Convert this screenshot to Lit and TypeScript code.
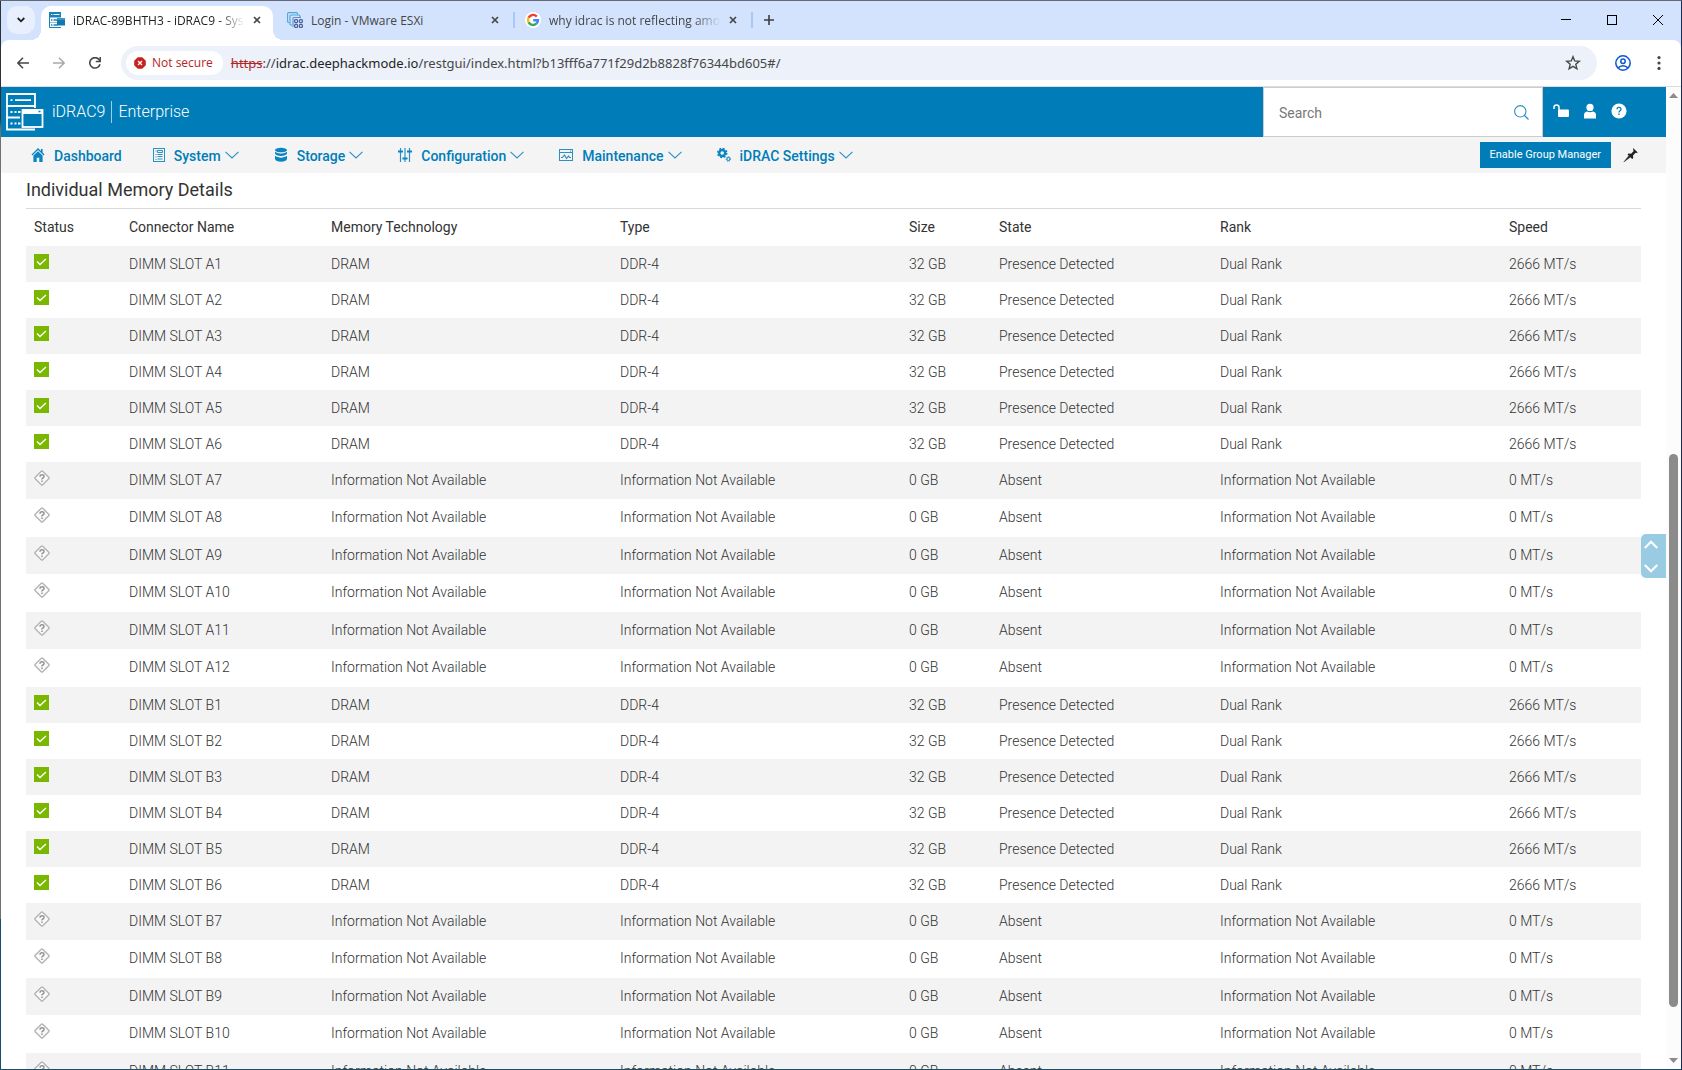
import { LitElement, html, css, svg, nothing } from "lit";
import { customElement, property } from "lit/decorators.js";
import { classMap } from "lit/directives/class-map.js";

interface Dimm {
  slot: string;
  present: boolean;
}

const slots = (bank: string, count: number): Dimm[] =>
  Array.from({ length: count }, (_, i) => ({ slot: `DIMM SLOT ${bank}${i + 1}`, present: i < 6 }));

const DIMMS: Dimm[] = [...slots("A", 12), ...slots("B", 11)];

const icon = (w: number, h: number, body: unknown) =>
  html`<svg width=${w} height=${h} viewBox="0 0 ${w} ${h}" fill="none" aria-hidden="true">${body}</svg>`;

const closeIcon = icon(8, 8, svg`<path d="M1 1l6 6M7 1l-6 6" stroke="#444746" stroke-width="1.7"/>`);

const serverFavicon = icon(16, 16, svg`
  <rect x="0" y="0" width="12" height="5" fill="#1a82b5"/>
  <path d="M2 2.5h1.4M4.5 2.5h6" stroke="#fff" stroke-width="1"/>
  <path d="M0 5.5h12M0 10.5h8" stroke="#8cc3de" stroke-width="1"/>
  <path d="M.5 5v10.5H12" stroke="#1a82b5"/>
  <path d="M2 8h1.4M4.5 8h4M2 13h1.4M4.5 13h4" stroke="#1a82b5" stroke-width="1.3"/>
  <rect x="8" y="6" width="8" height="7.5" fill="#1378ab"/>
  <path d="M8 7h8" stroke="#6fb2d3"/>`);

const vmwareFavicon = icon(16, 16, svg`
  <path d="M2.6 10.5H1.6Q.6 10.5 .6 9.5V1.6Q.6 .6 1.6 .6H9.5Q10.5 .6 10.5 1.6V2.6" stroke="#4aa8dc" stroke-width="1.1"/>
  <path d="M5 13H4Q3 13 3 12V4Q3 3 4 3H12Q13 3 13 4V5" stroke="#4aa8dc" stroke-width="1.1"/>
  <path d="M6 15V6.5Q6 5.5 7 5.5H14" stroke="#5d8fc4" stroke-width="1.1"/>
  <g stroke="#49609c" stroke-width="1.2">
    <rect x="7.6" y="7.6" width="3" height="3" rx="1"/><rect x="12.4" y="7.6" width="3" height="3" rx="1"/>
    <rect x="7.6" y="12.4" width="3" height="3" rx="1"/><rect x="12.4" y="12.4" width="3" height="3" rx="1"/>
  </g>`);

const googleFavicon = icon(16, 16, svg`
  <circle cx="8" cy="8" r="8" fill="#fff"/>
  <g stroke-width="2.4">
    <path d="M11.8 4.6A5 5 0 0 0 3.5 5.8" stroke="#ea4335"/>
    <path d="M3.5 5.8A5 5 0 0 0 3.6 10.4" stroke="#fbbc05"/>
    <path d="M3.6 10.4A5 5 0 0 0 11.3 11.7" stroke="#34a853"/>
    <path d="M11.3 11.7A5 5 0 0 0 13 8.2H8.2" stroke="#4285f4"/>
  </g>`);

const chevronIcon = icon(14, 8, svg`<path d="M.5 .8L7 7 13.5 .8" stroke="#2b90c4" stroke-width="1.1"/>`);

const navIcons: Record<string, unknown> = {
  home: icon(14, 16, svg`<path d="M7 1L.5 7.5l.8 .9L7 3l5.7 5.4 .8-.9L11.6 5.500V2H10v2z" fill="#0b84c1"/>
    <path d="M2.400 8.500L7 4.200l4.600 4.300V15H8.300v-4.200H5.700V15H2.400z" fill="#0b84c1"/>`),
  system: icon(14, 16, svg`<rect x="2.5" y="1.5" width="11" height="13" stroke="#2b90c4"/>
    <path d="M4.500 4h1M4.500 7.500h1M4.500 10h1M4.500 12.500h1" stroke="#2b90c4"/>
    <path d="M6.500 3.500h5v2h-5zM6.500 7.500h5M6.500 9.500h5M6.500 12h5" stroke="#2b90c4"/>`),
  storage: icon(14, 16, svg`<g fill="#0b84c1"><ellipse cx="7" cy="3.200" rx="6" ry="2.400"/>
    <path d="M1 4.300Q7 8 13 4.300V6.600Q12 9 7 9T1 6.600z"/><path d="M1 8.800Q7 12.200 13 8.800V12Q12 14.800 7 14.800T1 12z"/></g>
    <path d="M1 4.400Q7 7.800 13 4.400M1 8.300Q7 11.800 13 8.300" stroke="#f4f4f4"/>`),
  config: icon(14, 16, svg`<path d="M2.500 1v14M7 1v14M11.500 1v14" stroke="#2b90c4" stroke-width="1.200"/>
    <path d="M0 4.500h5M4.500 11.500h5M9 4.500h5" stroke="#0b84c1" stroke-width="2"/>`),
  maintenance: icon(14, 16, svg`<rect x=".5" y="2.500" width="13" height="11" stroke="#2b90c4"/>
    <path d="M1 5.500h12M11 4h1" stroke="#2b90c4"/><path d="M2 10.500h1.500L5.500 8l2 3.500L9.500 9l1 1.500H12" stroke="#2b90c4" stroke-width="1.100"/>`),
  gears: icon(14, 16, svg`<circle cx="5.200" cy="6" r="3" stroke="#0b84c1" stroke-width="2.400"/>
    <circle cx="5.200" cy="6" r="4.600" stroke="#0b84c1" stroke-width="1.400" stroke-dasharray="1.900 1.710"/>
    <circle cx="11.400" cy="12" r="1.500" stroke="#2b90c4" stroke-width="1.200"/>
    <circle cx="11.400" cy="12" r="2.300" stroke="#2b90c4" stroke-width="1" stroke-dasharray="1 .8"/>`),
};

const okIcon = html`<svg width="15" height="15" viewBox="0 0 15 15" role="img" aria-label="OK">
  <rect width="15" height="15" fill="#7ab800"/><path d="M3 7.500l3 3 6-5.500" fill="none" stroke="#fff" stroke-width="1.400"/></svg>`;

const unknownIcon = html`<svg width="16" height="16" viewBox="0 0 16 16" role="img" aria-label="Unknown" fill="none">
  <rect x="2.700" y="2.700" width="10.600" height="10.600" rx="1" transform="rotate(45 8 8)" fill="#fafafa" stroke="#b2b2b2" stroke-width="1.300"/>
  <path d="M6 6.700Q6 4.800 8 4.800T10 6.500Q10 7.400 8.900 8T8 9.500M8 10.500V12" stroke="#949494" stroke-width="1.500"/></svg>`;

@customElement("browser-chrome")
class BrowserChrome extends LitElement {
  static styles = css`
    :host { display: block; font: 12px/18px "Open Sans", "Noto Sans", sans-serif; color: #1f1f1f; }
    button { border: 0; padding: 0; background: none; font: inherit; display: flex; align-items: center; justify-content: center; }
    svg { display: block; flex: none; }
    .strip { display: flex; height: 39px; background: #d3e2fd; align-items: flex-end; padding-left: 6px; }
    .search-tabs { width: 28px; height: 28px; border-radius: 10px; background: #e9f0fd; margin: 0 6px 6px 0; }
    .tabs { display: flex; flex: 1; min-width: 0; }
    .tab { position: relative; display: flex; align-items: center; box-sizing: border-box; width: 232px; height: 34px; margin-right: 6px; padding: 0 12px 6px 8px; gap: 8px; color: #444746; }
    .tab.active { background: #fff; color: #1f1f1f; border-radius: 10px 10px 0 0; }
    .tab.active::before, .tab.active::after { content: ""; position: absolute; bottom: 0; width: 10px; height: 10px; }
    .tab.active::before { right: 100%; background: radial-gradient(circle at 0 0, #d3e2fd 10px, #fff 10px); }
    .tab.active::after { left: 100%; background: radial-gradient(circle at 100% 0, #d3e2fd 10px, #fff 10px); }
    .tab.divided::after { content: ""; position: absolute; right: -4px; top: 6px; width: 2px; height: 16px; background: #a8c7fa; }
    .tab-title { flex: 1; min-width: 0; padding-top: 2px; white-space: nowrap; }
    .tab-title.fade { mask-image: linear-gradient(to right, #000 84%, transparent); }
    .new-tab { width: 28px; height: 28px; }
    .window { display: flex; align-self: stretch; }
    .window button { width: 46px; height: 37px; }
    .backing { background: #d3e2fd; }
    .bar { display: flex; height: 46px; align-items: center; background: #fff; padding: 0 4px; border-radius: 8px 8px 0 0; }
    .tool { width: 36px; height: 36px; }
    .omnibox { display: flex; align-items: center; flex: 1; min-width: 0; height: 34px; box-sizing: border-box; border-radius: 17px; background: #ecf1fa; margin: 0 8px; padding: 0 16px 0 5px; }
    .chip { display: flex; align-items: center; height: 24px; padding: 0 10px 0 8px; gap: 6px; border-radius: 12px; background: #fff; color: #b3261e; }
    .url { flex: 1; margin-left: 8px; color: #474747; font: 13px/20px "Noto Sans", "Open Sans", sans-serif; white-space: nowrap; }
    .scheme { color: #b3261e; text-decoration: line-through; }
    .domain { color: #1f1f1f; }
    .edge { height: 1px; background: #dcdcdc; }
  `;

  render() {
    return html`
      <div class="strip">
        <button class="search-tabs" aria-label="Search tabs">${icon(8, 6, svg`<path d="M.7 1L4 4.300 7.300 1" stroke="#1f1f1f" stroke-width="1.800"/>`)}</button>
        <div class="tabs">
          <div class="tab active">${serverFavicon}<span class="tab-title fade">iDRAC-89BHTH3 - iDRAC9 - Sys</span><button aria-label="Close tab">${closeIcon}</button></div>
          <div class="tab divided">${vmwareFavicon}<span class="tab-title">Login - VMware ESXi</span><button aria-label="Close tab">${closeIcon}</button></div>
          <div class="tab divided">${googleFavicon}<span class="tab-title fade">why idrac is not reflecting amou</span><button aria-label="Close tab">${closeIcon}</button></div>
          <button class="new-tab" aria-label="New tab">${icon(10, 10, svg`<path d="M5 0v10M0 5h10" stroke="#3c3f42" stroke-width="1.600"/>`)}</button>
        </div>
        <div class="window">
          <button aria-label="Minimize">${icon(10, 10, svg`<path d="M0 4.500h10" stroke="#000"/>`)}</button>
          <button aria-label="Maximize">${icon(10, 10, svg`<rect x=".5" y=".5" width="9" height="9" stroke="#000"/>`)}</button>
          <button aria-label="Close">${icon(10, 10, svg`<path d="M0 0l10 10M10 0L0 10" stroke="#000"/>`)}</button>
        </div>
      </div>
      <div class="backing"><div class="bar">
        <button class="tool" aria-label="Back">${icon(12, 12, svg`<path d="M12 6H1M6 .8L.9 6 6 11.200" stroke="#474747" stroke-width="1.500"/>`)}</button>
        <button class="tool" aria-label="Forward">${icon(12, 12, svg`<path d="M0 6h11M6 .8L11.100 6 6 11.200" stroke="#a9a9a9" stroke-width="1.500"/>`)}</button>
        <button class="tool" aria-label="Reload">${icon(12, 12, svg`<path d="M11 7.200A5.200 5.200 0 1 1 10.200 2.800L11 4" stroke="#474747" stroke-width="1.600"/><path d="M11.200 0v4.500H6.800" stroke="#474747" stroke-width="1.500"/>`)}</button>
        <div class="omnibox">
          <button class="chip">${icon(12, 12, svg`<path d="M3.800 .2h4.400l3.600 3.600v4.400L8.200 11.800H3.800L.2 8.200V3.800z" fill="#c5221f"/><path d="M4 4l4 4M8 4L4 8" stroke="#fff" stroke-width="1.300"/>`)}Not secure</button>
          <span class="url"><span class="scheme">https</span>://<span class="domain">idrac.deephackmode.io</span>/restgui/index.html?b13fff6a771f29d2b8828f76344bd605#/</span>
          <button aria-label="Bookmark this tab">${icon(16, 16, svg`<path d="M8 1.700l1.700 4.200 4.600 .4-3.500 3 1.100 4.500L8 11.400l-3.900 2.400 1.100-4.500-3.500-3 4.600-.4z" stroke="#474747" stroke-width="1.400"/>`)}</button>
        </div>
        <button class="tool" aria-label="Profile">${icon(16, 16, svg`<g stroke="#0b57d0" stroke-width="1.500"><circle cx="8" cy="8" r="7.200"/><circle cx="8" cy="6.300" r="2.200"/><path d="M3 13Q5 10.700 8 10.700T13 13"/></g>`)}</button>
        <button class="tool" aria-label="Menu">${icon(4, 14, svg`<g fill="#474747"><circle cx="2" cy="1.600" r="1.600"/><circle cx="2" cy="7" r="1.600"/><circle cx="2" cy="12.400" r="1.600"/></g>`)}</button>
      </div></div>
      <div class="edge"></div>`;
  }
}

@customElement("idrac-header")
class IdracHeader extends LitElement {
  static styles = css`
    :host { display: block; font: 14px/20px Roboto, "Liberation Sans", sans-serif; }
    svg { display: block; flex: none; }
    button { border: 0; padding: 0; background: none; font: inherit; color: inherit; }
    .brand { display: flex; align-items: stretch; height: 50px; background: #007db8; color: #fff; }
    .logo { display: flex; align-items: center; flex: 1; padding-left: 5px; font-size: 16px; font-weight: 300; }
    .name { margin-left: 8px; padding-right: 6px; border-right: 1px solid #9fcde4; line-height: 22px; }
    .edition { margin-left: 6px; }
    .search { display: flex; align-items: center; box-sizing: border-box; width: 280px; border: 1px solid #ccc; background: #fff; padding: 0 13px 0 15px; }
    .search input { flex: 1; min-width: 0; border: 0; outline: 0; padding: 2px 0 0; font: inherit; color: #333; }
    .search input::placeholder { color: #777; opacity: 1; }
    .actions { display: flex; align-items: center; gap: 13px; padding: 0 39px 2px 10px; }
    nav { display: flex; align-items: center; justify-content: space-between; height: 36px; background: #f4f4f4; padding: 0 27px 0 30px; }
    ul { display: flex; gap: 29px; margin: 0; padding: 0; list-style: none; }
    a { display: flex; align-items: center; gap: 9px; color: #007db8; font-weight: 500; text-decoration: none; white-space: nowrap; }
    .menu { padding-right: 6px; }
    .label { display: flex; align-items: center; gap: 4px; }
    .text { padding-top: 2px; }
    .side { display: flex; align-items: center; gap: 12px; }
    .group { height: 26px; padding: 0 10px; background: #007db8; color: #fff; font-size: 11px; line-height: 26px; white-space: nowrap; }
  `;

  private items: [string, string, boolean][] = [
    ["home", "Dashboard", false],
    ["system", "System", true],
    ["storage", "Storage", true],
    ["config", "Configuration", true],
    ["maintenance", "Maintenance", true],
    ["gears", "iDRAC Settings", true],
  ];

  render() {
    return html`
      <header class="brand">
        <div class="logo">
          ${icon(38, 38, svg`<path d="M29 15V1H1V36.500H29M1 13h28M1 24.500h13" stroke="#fff" stroke-width="1.800"/>
            <path d="M4.500 7.200h2M9 7.200h16M4.500 19h2M8.500 19h2M12 19h2.500M4.500 30.500h2M8.500 30.500h2M12 30.500h2.500" stroke="#fff" stroke-width="1.800"/>
            <rect x="16.500" y="17" width="20" height="17" fill="#007db8" stroke="#fff" stroke-width="1.800"/>
            <path d="M16 16.500h21v4.500H16z" fill="#fff"/><path d="M32.500 18.500h2" stroke="#007db8" stroke-width="1.500"/>`)}
          <span class="name">iDRAC9</span><span class="edition">Enterprise</span>
        </div>
        <div class="search">
          <input type="text" placeholder="Search" aria-label="Search" />
          <button aria-label="Run search">${icon(15, 15, svg`<circle cx="6.300" cy="6.300" r="5.700" stroke="#2b90c4" stroke-width="1.100"/><path d="M10.500 10.500L14.500 14.500" stroke="#2b90c4" stroke-width="1.200"/>`)}</button>
        </div>
        <div class="actions">
          <button aria-label="Lockdown mode">${icon(16, 14, svg`<path d="M1 5V3.500Q1 1 3.500 1T6 3.500V6" stroke="#fff" stroke-width="1.500"/><rect x="5" y="5.500" width="11" height="7.500" rx="1" fill="#fff"/>`)}</button>
          <button aria-label="User">${icon(16, 16, svg`<g fill="#fff"><circle cx="8" cy="4.400" r="3.600"/><path d="M2 15.500V12Q2 9.200 5 8.500Q8 10 11 8.500Q14 9.200 14 12v3.500z"/></g>`)}</button>
          <button aria-label="Help">${icon(16, 16, svg`<circle cx="8" cy="8" r="7.600" fill="#fff"/><path d="M6 6.300Q6 4.300 8 4.300T10 6.200Q10 7.200 9 7.800T8 9.400M8 10.600V12" stroke="#007db8" stroke-width="1.300"/>`)}</button>
        </div>
      </header>
      <nav>
        <ul>
          ${this.items.map(([glyph, label, menu]) => html`<li class=${classMap({ menu })}><a href="#">${navIcons[glyph]}<span class="label"><span class="text">${label}</span>${menu ? chevronIcon : nothing}</span></a></li>`)}
        </ul>
        <div class="side">
          <button class="group">Enable Group Manager</button>
          <button aria-label="Pin menu">${icon(16, 16, svg`<path d="M.8 15L6 8.500 7.500 10z" fill="#222" stroke="#222" stroke-width=".4"/><path d="M10 1l4.800 4.500-1.300 .6-.9-.3-2.600 2.700 .2 2.600-1 .9L4.500 7.600l1-1 2.600 .1L10.700 4l-.5-1z" fill="#222"/>`)}</button>
        </div>
      </nav>`;
  }
}

@customElement("memory-table")
class MemoryTable extends LitElement {
  @property({ attribute: false }) dimms: Dimm[] = [];

  static styles = css`
    :host { display: block; padding: 0 25px; font: 14px/20px Roboto, "Liberation Sans", sans-serif; color: #333; }
    h2 { margin: 0; height: 35px; border-bottom: 1px solid #d9d9d9; font-size: 18px; line-height: 34px; font-weight: 400; }
    table { width: 100%; table-layout: fixed; border-collapse: collapse; }
    th, td { box-sizing: border-box; padding: 8px 8px 0; text-align: left; vertical-align: top; white-space: nowrap; }
    th { height: 37px; font-weight: 400; }
    td { height: 36px; font-weight: 300; }
    .absent td { height: 37px; }
    .absent:nth-child(even) td { height: 38px; }
    tbody tr:nth-child(odd) { background: #f3f3f3; }
    svg { display: block; }
    .c-status { width: 95px; }
    .c-name { width: 202px; }
    .c-wide { width: 289px; }
    .c-size { width: 90px; }
    .c-state { width: 221px; }
    .c-speed { width: 140px; }
  `;

  render() {
    const na = "Information Not Available";
    return html`
      <h2>Individual Memory Details</h2>
      <table>
        <colgroup>
          <col class="c-status" /><col class="c-name" /><col class="c-wide" /><col class="c-wide" />
          <col class="c-size" /><col class="c-state" /><col class="c-wide" /><col class="c-speed" />
        </colgroup>
        <thead>
          <tr><th>Status</th><th>Connector Name</th><th>Memory Technology</th><th>Type</th><th>Size</th><th>State</th><th>Rank</th><th>Speed</th></tr>
        </thead>
        <tbody>
          ${this.dimms.map(({ slot, present }) => html`
            <tr class=${classMap({ absent: !present })}>
              <td>${present ? okIcon : unknownIcon}</td>
              <td>${slot}</td>
              <td>${present ? "DRAM" : na}</td>
              <td>${present ? "DDR-4" : na}</td>
              <td>${present ? "32 GB" : "0 GB"}</td>
              <td>${present ? "Presence Detected" : "Absent"}</td>
              <td>${present ? "Dual Rank" : na}</td>
              <td>${present ? "2666 MT/s" : "0 MT/s"}</td>
            </tr>`)}
        </tbody>
      </table>`;
  }
}

@customElement("app-root")
class AppRoot extends LitElement {
  static styles = css`
    :host { display: block; height: 100vh; }
    .window { display: flex; flex-direction: column; height: 100%; box-sizing: border-box; overflow: hidden;
      padding-left: 1px; border-top: 1px solid #666875; border-right: 1px solid #1b2a57; border-bottom: 1px solid #17506f;
      background: linear-gradient(#303038 11%, #707074 12%, #707074 86%, #17506f 86%); }
    .viewport { position: relative; display: flex; flex: 1; min-height: 0; background: #fff; }
    .page { flex: 1; min-width: 0; overflow: hidden; }
    .scrollbar { display: flex; flex-direction: column; align-items: center; width: 15px; background: #fcfcfc; }
    .arrow { display: flex; align-items: center; height: 17px; }
    .before { flex: 350; }
    .thumb { flex: 553; width: 9px; border-radius: 5px; background: #8b8b8b; }
    .after { flex: 45; }
    .jump { position: absolute; right: 15px; top: calc(50% - 44px); display: flex; flex-direction: column; gap: 4px; width: 25px; height: 44px; border-radius: 5px 0 0 5px; background: #99cbe3; }
    .jump button { display: flex; align-items: center; flex: 1; border: 0; padding: 0 0 0 3px; background: none; }
    svg { display: block; flex: none; }
  `;

  render() {
    return html`
      <div class="window">
        <browser-chrome></browser-chrome>
        <div class="viewport">
          <div class="page">
            <idrac-header></idrac-header>
            <memory-table .dimms=${DIMMS}></memory-table>
          </div>
          <div class="scrollbar">
            <div class="arrow">${icon(9, 5, svg`<path d="M0 5L4.500 0 9 5z" fill="#8b8b8b"/>`)}</div>
            <div class="before"></div>
            <div class="thumb"></div>
            <div class="after"></div>
            <div class="arrow">${icon(9, 5, svg`<path d="M0 0h9L4.500 5z" fill="#8b8b8b"/>`)}</div>
          </div>
          <div class="jump">
            <button aria-label="Scroll to top">${icon(14, 9, svg`<path d="M.8 8L7 1.800 13.200 8" stroke="#fff" stroke-width="2.200"/>`)}</button>
            <button aria-label="Scroll to bottom">${icon(14, 9, svg`<path d="M.8 1L7 7.200 13.200 1" stroke="#fff" stroke-width="2.200"/>`)}</button>
          </div>
        </div>
      </div>`;
  }
}
